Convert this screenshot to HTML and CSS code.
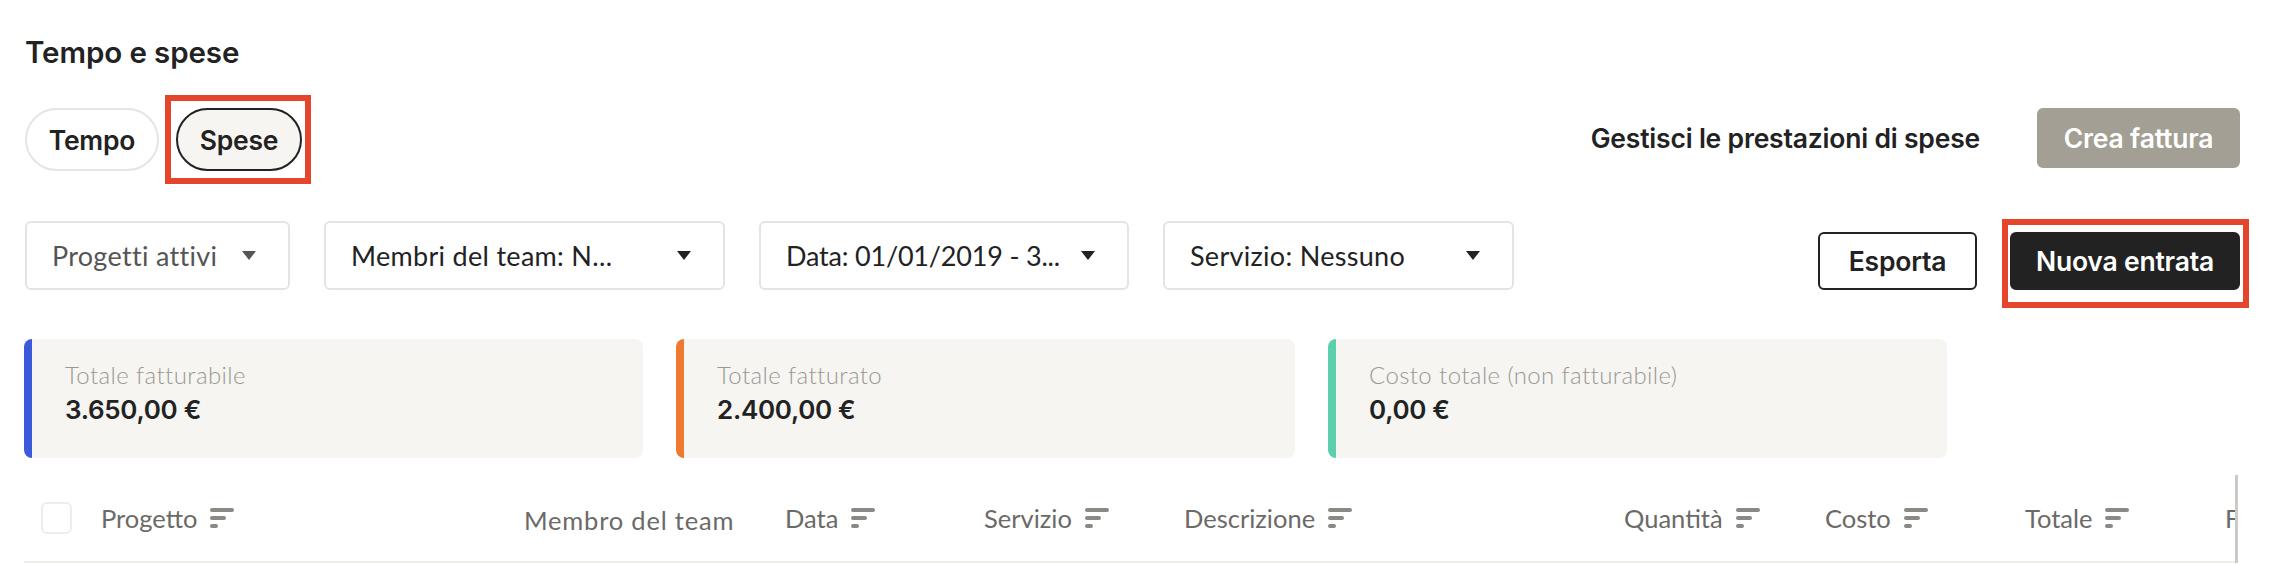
FILE: index.html
```html
<!DOCTYPE html>
<html lang="it">
<head>
<meta charset="utf-8">
<title>Tempo e spese</title>
<link rel="stylesheet" href="styles.css">
</head>
<body>
<div class="page">
  <h1 class="title">Tempo e spese</h1>

  <div class="row-tabs">
    <div class="tabs">
      <button class="tab tab-tempo">Tempo</button>
      <button class="tab tab-active">Spese<span class="mark mark-tab"></span></button>
    </div>
    <div class="top-actions">
      <span class="manage">Gestisci le prestazioni di spese</span>
      <button class="btn btn-muted">Crea fattura</button>
    </div>
  </div>

  <div class="row-filters">
    <div class="filters">
      <div class="filter f-progetti muted-filter"><span class="ftext">Progetti attivi</span><span class="caret"></span></div>
      <div class="filter f-membri"><span class="ftext">Membri del team: N...</span><span class="caret"></span></div>
      <div class="filter f-data"><span class="ftext">Data: 01/01/2019 - 3...</span><span class="caret"></span></div>
      <div class="filter f-servizio"><span class="ftext">Servizio: Nessuno</span><span class="caret"></span></div>
    </div>
    <div class="actions">
      <button class="btn btn-outline">Esporta</button>
      <button class="btn btn-dark">Nuova entrata<span class="mark mark-btn"></span></button>
    </div>
  </div>

  <div class="cards">
    <div class="card card-blue">
      <div class="card-label">Totale fatturabile</div>
      <div class="card-value">3.650,00 €</div>
    </div>
    <div class="card card-orange">
      <div class="card-label">Totale fatturato</div>
      <div class="card-value">2.400,00 €</div>
    </div>
    <div class="card card-teal">
      <div class="card-label">Costo totale (non fatturabile)</div>
      <div class="card-value">0,00 €</div>
    </div>
  </div>

  <div class="table">
    <div class="thead">
      <div class="th th-check"><span class="checkbox"></span></div>
      <div class="th">Progetto<span class="sort"><i class="b1"></i><i class="b2"></i><i class="b3"></i></span></div>
      <div class="th th-member">Membro del team</div>
      <div class="th">Data<span class="sort"><i class="b1"></i><i class="b2"></i><i class="b3"></i></span></div>
      <div class="th">Servizio<span class="sort"><i class="b1"></i><i class="b2"></i><i class="b3"></i></span></div>
      <div class="th">Descrizione<span class="sort"><i class="b1"></i><i class="b2"></i><i class="b3"></i></span></div>
      <div class="th">Quantità<span class="sort"><i class="b1"></i><i class="b2"></i><i class="b3"></i></span></div>
      <div class="th">Costo<span class="sort"><i class="b1"></i><i class="b2"></i><i class="b3"></i></span></div>
      <div class="th">Totale<span class="sort"><i class="b1"></i><i class="b2"></i><i class="b3"></i></span></div>
      <div class="th">Fatturato</div>
    </div>
  </div>
</div>
</body>
</html>
```

FILE: styles.css
```css
* { box-sizing: border-box; }
html, body { margin: 0; padding: 0; background: #fff; }
body {
  font-family: "Lato", "Liberation Sans", sans-serif;
  color: #222;
  width: 2270px;
  height: 564px;
  overflow: hidden;
}
.page { padding: 35px 30px 0 24px; }

.title {
  margin: 0;
  font-family: "Inter", "Lato", sans-serif;
  font-size: 29.5px;
  line-height: 34px;
  font-weight: 600;
  letter-spacing: -0.1px;
  color: #222;
  padding-left: 1px;
}

button { font-family: "Inter", "Lato", sans-serif; cursor: pointer; }

.row-tabs {
  margin-top: 39px;
  display: flex;
  justify-content: space-between;
  align-items: flex-start;
}
.tabs { display: flex; gap: 17px; padding-left: 1px; }
.tab {
  position: relative;
  height: 63px;
  padding: 0;
  border: 2px solid #e7e5df;
  border-radius: 32px;
  background: #fff;
  font-size: 26.5px;
  font-weight: 600;
  letter-spacing: -0.2px;
  color: #222;
  text-align: center;
}
.tab-tempo { width: 134px; }
.tab-active {
  width: 126px;
  background: #f6f5f1;
  border-color: #222;
}
.mark {
  position: absolute;
  border: 6px solid #e5452b;
  pointer-events: none;
}
.mark-tab { top: -15px; bottom: -15px; left: -13px; right: -11px; }
.mark-btn { top: -15px; bottom: -20px; left: -10px; right: -11px; }

.top-actions { display: flex; align-items: center; gap: 57px; }
.manage {
  font-family: "Inter", "Lato", sans-serif;
  font-size: 26.5px;
  font-weight: 600;
  letter-spacing: -0.2px;
  color: #222;
}

.btn {
  position: relative;
  height: 60px;
  border-radius: 6px;
  font-size: 26.5px;
  font-weight: 600;
  letter-spacing: -0.2px;
  border: 2px solid transparent;
  padding: 0;
  text-align: center;
}
.btn-muted { width: 203px; background: #a39f94; color: #fff; border-color: #a39f94; }
.btn-outline { width: 159px; height: 58px; background: #fff; border-color: #222; color: #222; }
.btn-dark { width: 230px; height: 58px; background: #222; border-color: #222; color: #fff; }

.row-filters {
  margin-top: 50px;
  display: flex;
  justify-content: space-between;
  align-items: flex-end;
}
.filters { display: flex; gap: 34px; padding-left: 1px; }
.filter {
  height: 69px;
  border: 2px solid #e6e4de;
  border-radius: 6px;
  display: flex;
  align-items: center;
  justify-content: space-between;
  padding: 0 32px 0 25px;
  font-size: 27px;
  letter-spacing: 0.3px;
  color: #222;
}
.f-progetti { width: 265px; }
.f-membri { width: 401px; }
.f-data { width: 370px; letter-spacing: -0.2px; }
.f-servizio { width: 351px; }
.muted-filter { color: #555; }
.ftext { white-space: nowrap; }
.caret {
  width: 0; height: 0;
  border-left: 7px solid transparent;
  border-right: 7px solid transparent;
  border-top: 9px solid #222;
}
.muted-filter .caret { border-top-color: #555; }
.actions { display: flex; gap: 33px; }

.cards {
  margin-top: 49px;
  display: flex;
  gap: 33px;
}
.card {
  width: 619px;
  height: 119px;
  background: #f6f5f2;
  border-radius: 8px;
  border-left: 8px solid;
  padding: 21px 0 0 33px;
}
.card-blue { border-left-color: #3a5bd9; }
.card-orange { border-left-color: #ee7a30; }
.card-teal { border-left-color: #5dceae; }
.card-label { font-size: 24px; line-height: 30px; color: #9a9894; font-weight: 300; letter-spacing: 0.4px; }
.card-value {
  margin-top: 4px;
  font-family: "Inter", "Lato", sans-serif;
  font-size: 26px;
  line-height: 32px;
  font-weight: 600;
  letter-spacing: -0.3px;
  color: #222;
}

.table {
  margin-top: 17px;
  width: 2214px;
  overflow: hidden;
  border-right: 3px solid #cbc9c4;
}
.thead {
  height: 88px;
  display: grid;
  grid-template-columns: 77px 423px 261px 199px 200px 440px 201px 200px 200px 200px;
  align-items: center;
  border-bottom: 2px solid #efeeea;
}
.th {
  display: flex;
  align-items: center;
  gap: 13px;
  font-size: 25.5px;
  color: #6b6a67;
  white-space: nowrap;
}
.th-member { letter-spacing: 0.8px; padding-top: 4px; }
.th-check { padding-left: 17px; }
.checkbox {
  width: 31px; height: 32px;
  border: 2px solid #eeede9;
  border-radius: 6px;
  background: #fff;
}
.sort { display: flex; flex-direction: column; gap: 4px; width: 24px; }
.sort i { display: block; height: 4px; border-radius: 2px; background: #8a8986; }
.sort .b1 { width: 24px; }
.sort .b2 { width: 16px; }
.sort .b3 { width: 8px; }
```
